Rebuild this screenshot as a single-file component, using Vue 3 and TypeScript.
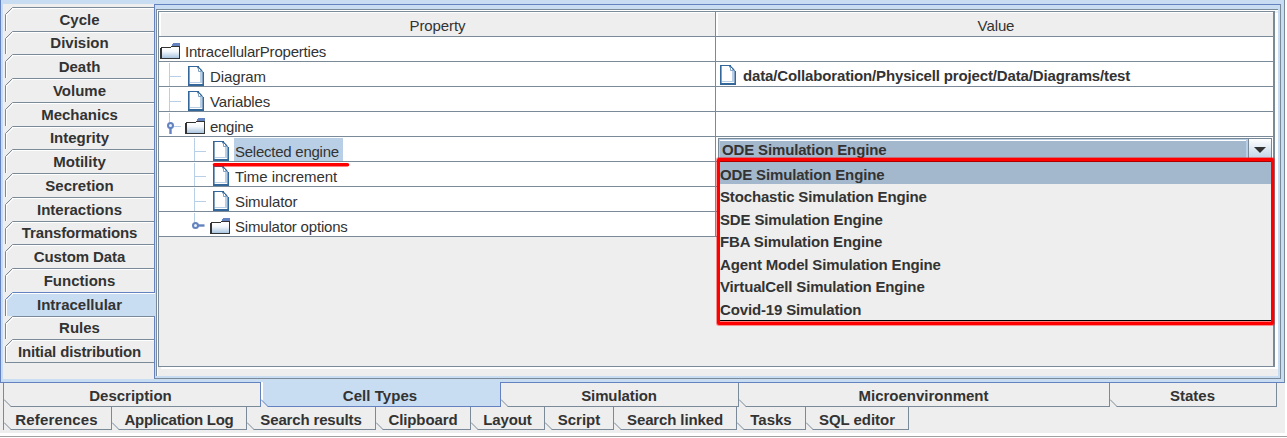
<script setup lang="ts">
interface Tab { label: string; size: number; active?: boolean; ls?: number }
interface Row { label: string; depth: number; icon: 'file' | 'folder'; toggle?: 'open' | 'closed'; selected?: boolean; value?: string; ls?: number }

const sideTabs: Tab[] = [
  { label: 'Cycle', size: 24 }, { label: 'Division', size: 23 }, { label: 'Death', size: 24 },
  { label: 'Volume', size: 24 }, { label: 'Mechanics', size: 24 }, { label: 'Integrity', size: 23 },
  { label: 'Motility', size: 24 }, { label: 'Secretion', size: 24 }, { label: 'Interactions', size: 24 },
  { label: 'Transformations', size: 23, ls: -0.15 }, { label: 'Custom Data', size: 24, ls: -0.1 }, { label: 'Functions', size: 24 },
  { label: 'Intracellular', size: 24, active: true }, { label: 'Rules', size: 23 }, { label: 'Initial distribution', size: 24, ls: -0.13 },
]
const mainTabs: Tab[] = [
  { label: 'Description', size: 258 }, { label: 'Cell Types', size: 240, active: true, ls: 0.05 },
  { label: 'Simulation', size: 238, ls: -0.1 }, { label: 'Microenvironment', size: 371 }, { label: 'States', size: 167 },
]
const lowerTabs: Tab[] = [
  { label: 'References', size: 109, ls: 0.15 }, { label: 'Application Log', size: 135, ls: -0.3 }, { label: 'Search results', size: 129, ls: -0.15 },
  { label: 'Clipboard', size: 95, ls: -0.1 }, { label: 'Layout', size: 74, ls: -0.15 }, { label: 'Script', size: 69 },
  { label: 'Search linked', size: 123, ls: -0.13 }, { label: 'Tasks', size: 69 }, { label: 'SQL editor', size: 103, ls: -0.05 },
]
const rows: Row[] = [
  { label: 'IntracellularProperties', depth: 0, icon: 'folder', ls: -0.21 },
  { label: 'Diagram', depth: 1, icon: 'file', value: 'data/Collaboration/Physicell project/Data/Diagrams/test', ls: -0.1 },
  { label: 'Variables', depth: 1, icon: 'file', ls: -0.15 },
  { label: 'engine', depth: 1, icon: 'folder', toggle: 'open', ls: -0.3 },
  { label: 'Selected engine', depth: 2, icon: 'file', selected: true, ls: -0.25 },
  { label: 'Time increment', depth: 2, icon: 'file', ls: -0.04 },
  { label: 'Simulator', depth: 2, icon: 'file', ls: -0.12 },
  { label: 'Simulator options', depth: 2, icon: 'folder', toggle: 'closed', ls: -0.19 },
]
const engines: string[] = [
  'ODE Simulation Engine', 'Stochastic Simulation Engine', 'SDE Simulation Engine', 'FBA Simulation Engine',
  'Agent Model Simulation Engine', 'VirtualCell Simulation Engine', 'Covid-19 Simulation',
]
const spacing = (ls?: number): string => (ls ?? 0) + 'px'
</script>

<template>
  <div class="app">
    <svg width="0" height="0" class="defs">
      <defs>
        <linearGradient id="fold" x1="0" y1="0" x2="0" y2="1">
          <stop offset="0" stop-color="#fff" /><stop offset=".35" stop-color="#f4f8fc" /><stop offset="1" stop-color="#a9c5e0" />
        </linearGradient>
        <symbol id="file" viewBox="0 0 16 20">
          <path d="M1 1H11L15 5V18H1Z" fill="#fff" />
          <path d="M12 6H14V17H2V16H12Z" fill="#b8cfe5" />
          <path d="M0 0H11V1H1.600V18H14.400V6H16V20H0Z" fill="#336699" />
          <path d="M9 1H11L12 2L14 4L15 6H14L12 4V3H10Z" fill="#336699" />
          <path d="M10.500 2V5.500H13.500" fill="none" stroke="#7fa3c6" />
        </symbol>
        <symbol id="folder" viewBox="0 0 20 17">
          <path d="M2 5H19V15H2Z" fill="url(#fold)" />
          <path d="M0 5H2V16H0Z M1 4H11V5H1Z M11 3H20V16H2V15H19V4H11Z" fill="#333" />
          <path d="M13 0H20V3H12V1H13Z" fill="#6382bf" />
        </symbol>
      </defs>
    </svg>

    <main class="frame">
      <nav class="side">
        <div v-for="t in sideTabs" :key="t.label" class="side-tab" :class="{ active: t.active, short: t.size === 23 }" :style="{ height: t.size + 'px', letterSpacing: spacing(t.ls) }">
          <svg class="corner" width="8" height="9" viewBox="0 0 8 9">
            <path d="M0 0H8L0 8Z" fill="#eee" />
            <path d="M1.500 9V8.500L8 2" fill="none" stroke="#fff" />
            <path class="edge" d="M.5 7.500L7.500 .5" fill="none" />
          </svg>
          <span>{{ t.label }}</span>
        </div>
      </nav>

      <section class="panel">
        <div class="scroll">
          <div class="head">
            <div class="th">Property</div>
            <div class="th">Value</div>
          </div>
          <div v-for="r in rows" :key="r.label" class="row">
            <div class="cell tree" :class="'d' + r.depth">
              <svg v-if="r.depth" class="branch" width="13" height="24" viewBox="0 0 13 24">
                <path v-if="!r.toggle" d="M.5 1V24M1 14.500H12" stroke="#b8cfe5" fill="none" />
                <g v-else-if="r.toggle === 'open'">
                  <path d="M.5 1V10M5 14.500H12" stroke="#b8cfe5" />
                  <path d="M1.500 15V22" stroke="#6382bf" stroke-width="2.400" />
                  <circle cx="1.500" cy="13.500" r="2.500" fill="#e8f0fa" stroke="#6382bf" stroke-width="2" />
                </g>
                <g v-else>
                  <path d="M.5 1V10" stroke="#b8cfe5" />
                  <path d="M4 13.500H10.500" stroke="#6382bf" stroke-width="2.400" />
                  <circle cx="1.500" cy="13.500" r="2.500" fill="#e8f0fa" stroke="#6382bf" stroke-width="2" />
                </g>
              </svg>
              <svg v-if="r.icon === 'file'" class="file" width="16" height="20"><use href="#file" /></svg>
              <svg v-else class="folder" width="20" height="17"><use href="#folder" /></svg>
              <span class="name" :class="{ selected: r.selected }" :style="{ letterSpacing: spacing(r.ls) }">{{ r.label }}</span>
              <svg v-if="r.selected" class="underline" width="142" height="6" viewBox="0 0 142 6">
                <path d="M2.500 2.800H135.500" stroke="#f00" stroke-width="3.600" stroke-linecap="round" />
              </svg>
            </div>
            <div class="cell value">
              <template v-if="r.value">
                <svg class="file" width="16" height="20"><use href="#file" /></svg>
                <b>{{ r.value }}</b>
              </template>
              <div v-if="r.selected" class="combo">
                <span class="current">ODE Simulation Engine</span>
                <span class="drop">
                  <svg width="12" height="6" viewBox="0 0 12 6"><path d="M0 0H12L6 6Z" fill="#333" /></svg>
                </span>
                <ul class="popup">
                  <li v-for="(e, n) in engines" :key="e" :class="{ on: n === 0 }">{{ e }}</li>
                </ul>
              </div>
            </div>
          </div>
        </div>
      </section>
    </main>

    <nav class="tabs main-tabs">
      <div v-for="t in mainTabs" :key="t.label" class="tab" :class="{ active: t.active }" :style="{ width: t.size + 'px', letterSpacing: spacing(t.ls) }">
        <svg class="cut" width="8" height="8" viewBox="0 0 8 8"><path d="M0 1L7 8H0Z" fill="#eee" /><path class="edge" d="M0 .5L7 7.500" /></svg>
        <span>{{ t.label }}</span>
      </div>
    </nav>
    <nav class="tabs lower-tabs">
      <div v-for="t in lowerTabs" :key="t.label" class="tab" :style="{ width: t.size + 'px', letterSpacing: spacing(t.ls) }">
        <svg class="cut" width="8" height="8" viewBox="0 0 8 8"><path d="M0 1L7 8H0Z" fill="#eee" /><path class="edge" d="M0 .5L7 7.500" /></svg>
        <span>{{ t.label }}</span>
      </div>
    </nav>
    <div class="status"></div>
  </div>
</template>

<style>
body { margin: 0; background: #fff; overflow: hidden; }
</style>
<style scoped>
*, *::after { box-sizing: border-box; }
.app { width: 1287px; height: 438px; background: #eee; font: 15px/18px "Liberation Sans", Arial, sans-serif; color: #333; border-right: 2px solid #fff; display: flex; flex-direction: column; position: relative; white-space: nowrap; }
.defs { position: absolute; }
.frame { height: 383px; border: 1px solid #7a8a99; border-left-color: #6382bf; border-bottom-color: #6382bf; border-top: 0; background: #c8ddf2; padding: 4px 3px 3px 2px; display: flex; flex: none; }
.side { width: 151px; background: #eee; padding: 3px 0 0 2px; display: flex; flex-direction: column; flex: none; }
.side-tab { position: relative; flex: none; border-top: 1px solid #7a8a99; border-left: 1px solid #7a8a99; box-shadow: inset 1px 1px 0 #fff; text-align: center; font-weight: bold; line-height: 24px; padding-right: 1px; }
.side-tab.short { line-height: 22px; }
.side-tab:last-child { border-bottom: 1px solid #7a8a99; }
.side-tab.active { background: #c8ddf2; border-color: #6382bf; margin-right: -1px; padding-right: 2px; z-index: 1; }
.corner { position: absolute; left: -1px; top: -1px; }
.edge { stroke: #7a8a99; }
.active .edge { stroke: #6382bf; }
.panel { width: 1127px; height: 375px; flex: none; border: 1px solid #7a8a99; border-top-color: #6382bf; border-left-color: #6382bf; padding: 4px 2px 2px 1px; }
.scroll { height: 367px; background: #eee; border-top: 1px solid #7a8a99; border-left: 1px solid #7a8a99; position: relative; padding: 1px 3px 9px 1px; box-shadow: inset 1px 1px 0 #fff; }
.scroll::after { content: ''; position: absolute; left: 1px; top: 1px; right: 3px; height: 356px; border: 1px solid #7a8a99; border-right-width: 2px; box-shadow: 3px 2px 0 #fff; pointer-events: none; }
.head { display: grid; grid-template: 25px / 557px 1fr; height: 26px; padding: 1px 2px 0 1px; }
.th { border-right: 1px solid #7a8a99; border-bottom: 1px solid #7a8a99; box-shadow: inset 2px 1px 0 #fff; text-align: center; line-height: 28px; letter-spacing: -.1px; padding-left: 1px; }
.th:last-child { border-right: 0; padding-left: 3px; }
.row { display: grid; grid-template: 25px / 557px 1fr; height: 25px; margin: 0 2px 0 1px; }
.cell { background: #fff; border-bottom: 1px solid #7a8a99; position: relative; display: flex; min-width: 0; }
.tree { border-right: 1px solid #7a8a99; padding-left: 2px; }
.d1 { padding-left: 10px; }
.d2 { padding-left: 35px; }
.branch { margin-right: 6px; flex: none; overflow: visible; }
.file { margin-top: 4px; flex: none; }
.folder { margin-top: 6px; flex: none; margin-left: -1px; }
.branch + .folder { margin-left: -3px; }
.name { margin: 1px 0 0 5px; height: 23px; line-height: 28px; padding: 0 4px 0 1px; }
.folder + .name { margin-left: 4px; }
.selected { background: #b8cfe5; }
.underline { position: absolute; left: 53px; top: 25px; z-index: 3; }
.value { padding-left: 4px; }
.value .file { margin-top: 3px; }
.value b { margin-left: 7px; line-height: 27px; letter-spacing: -.145px; }
.combo { position: absolute; left: 2px; top: 1px; width: 554px; height: 24px; border: 1px solid #7a8a99; background: #b8cfe5; display: flex; font-weight: bold; letter-spacing: -.15px; }
.current { margin: 2px 2px 0 1px; flex: 1; background: #a3b8cc; line-height: 18px; padding-left: 2px; box-shadow: 0 -1px 0 #fff; }
.drop { width: 23px; border-left: 1px solid #7a8a99; background: linear-gradient(#fff, #b8cfe5); display: flex; justify-content: center; padding-top: 8px; }
.popup { position: absolute; z-index: 2; left: -2px; top: 19px; width: 557px; height: 167px; margin: 0; padding: 1px 0 0; list-style: none; border: 3px solid #f00; border-radius: 2px; background: #eee; box-shadow: 0 0 0 1px rgba(255, 0, 0, .4), inset 0 -1px 0 #f77, inset 0 -2px 0 #000, inset 0 1px 0 #a00; }
.popup li { height: 22.500px; line-height: 25px; }
.popup .on { height: 22.200px; background: #a3b8cc; }
.tabs { display: flex; flex: none; padding-left: 3px; font-weight: bold; }
.tab { position: relative; border-right: 1px solid #7a8a99; border-bottom: 1px solid #7a8a99; text-align: center; height: 24px; line-height: 26px; flex: none; padding-right: 1px; }
.tab:first-child { border-left: 1px solid #7a8a99; }
.main-tabs .tab:first-child { border-right-color: #6382bf; padding-right: 3px; }
.main-tabs .tab.active { background: #c8ddf2; border-color: #6382bf; box-shadow: inset 2px 0 #fff; margin-top: -1px; height: 25px; padding-top: 1px; }
.lower-tabs .tab { height: 23px; padding-right: 0; }
.lower-tabs .tab:first-child { padding-right: 2px; }
.cut { position: absolute; left: 0; bottom: -1px; }
.status { height: 5px; margin-top: 3px; margin-right: -2px; border-top: 3px solid #fff; position: relative; background: linear-gradient(#a0a0a0 1px, #fff 1px); }
</style>
